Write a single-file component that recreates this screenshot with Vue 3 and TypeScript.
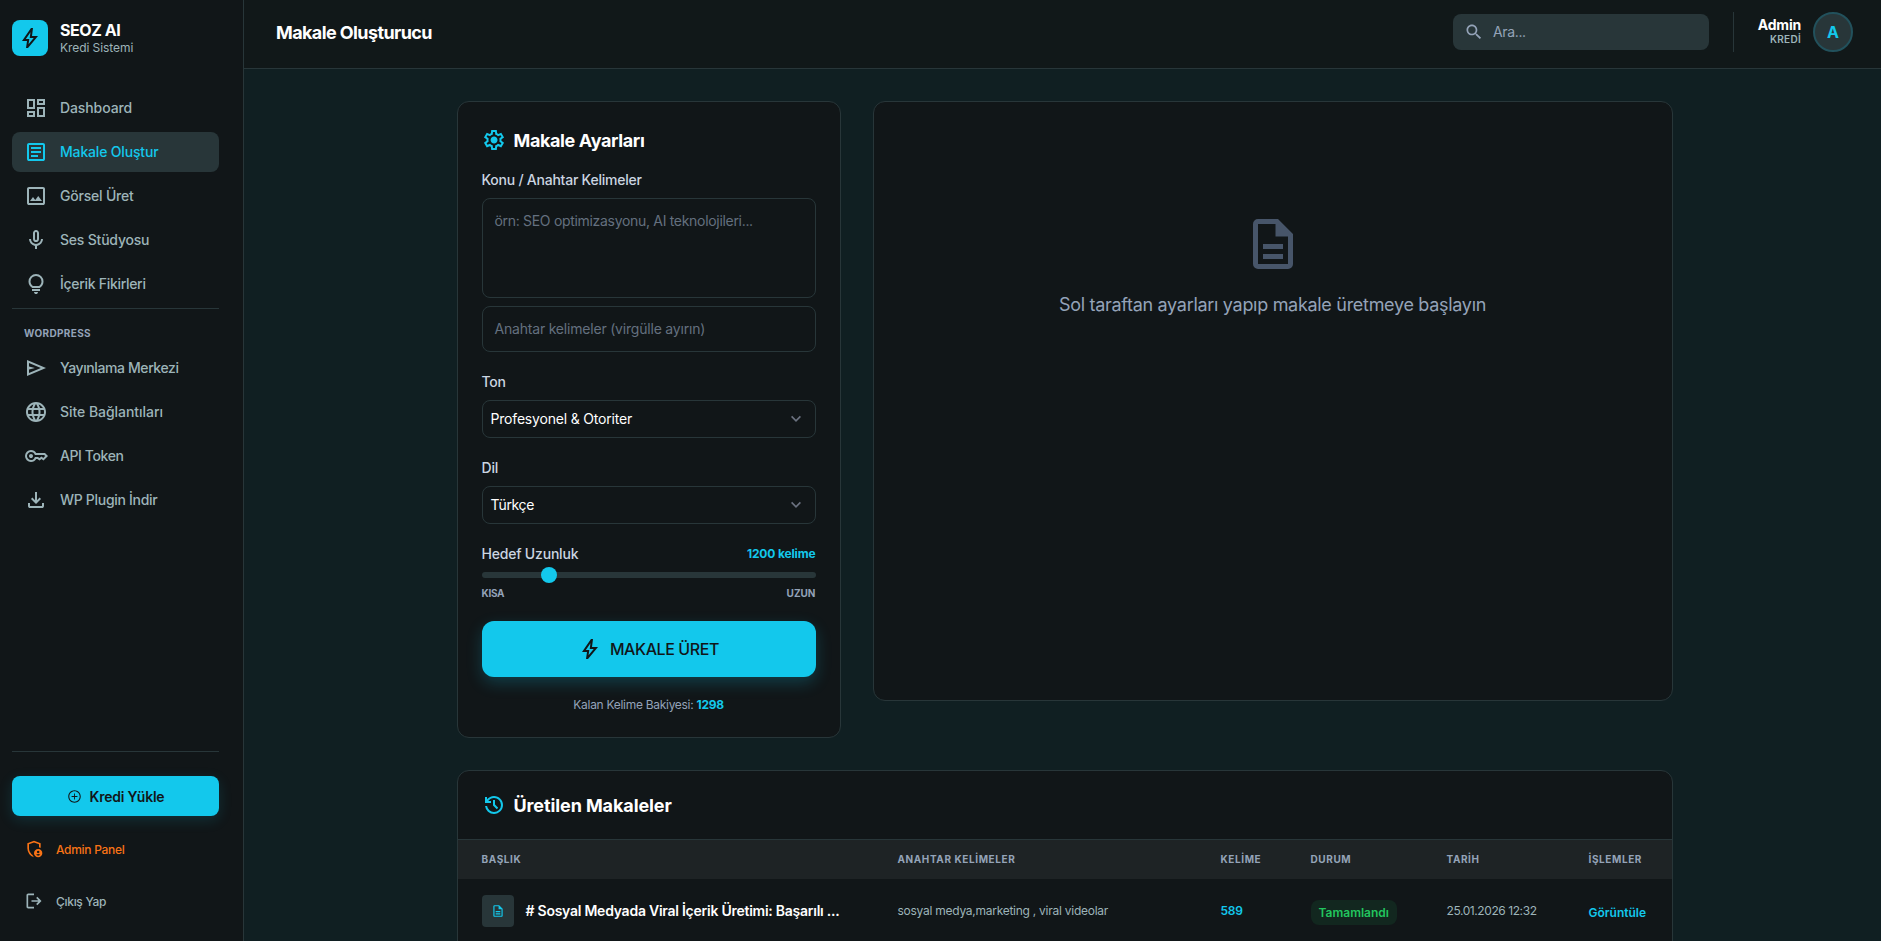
<script setup lang="ts">
import { computed, h, ref, type FunctionalComponent } from 'vue'

const icons: Record<string, string> = {
  bolt: 'm422-232 207-248H469l29-227-185 267h139l-30 208ZM320-80l40-280H160l360-520h80l-40 320h240L400-80h-80Z',
  dashboard: 'M520-600v-240h320v240H520ZM120-440v-400h320v400H120Zm400 320v-400h320v400H520Zm-400 0v-240h320v240H120Zm80-400h160v-240H200v240Zm400 320h160v-240H600v240Zm0-480h160v-80H600v80ZM200-200h160v-80H200v80Z',
  article: 'M280-280h280v-80H280v80Zm0-160h400v-80H280v80Zm0-160h400v-80H280v80Zm-80 480q-33 0-56.5-23.5T120-200v-560q0-33 23.5-56.5T200-840h560q33 0 56.5 23.5T840-760v560q0 33-23.5 56.5T760-120H200Zm0-80h560v-560H200v560Z',
  image: 'M200-120q-33 0-56.5-23.5T120-200v-560q0-33 23.5-56.5T200-840h560q33 0 56.5 23.5T840-760v560q0 33-23.5 56.5T760-120H200Zm0-80h560v-560H200v560Zm40-80h480L570-480 450-320l-90-120-120 160Z',
  mic: 'M480-400q-50 0-85-35t-35-85v-240q0-50 35-85t85-35q50 0 85 35t35 85v240q0 50-35 85t-85 35Zm-40 280v-123q-104-14-172-93t-68-184h80q0 83 58.5 141.5T480-320q83 0 141.5-58.5T680-520h80q0 105-68 184t-172 93v123h-80Zm40-360q17 0 28.5-11.5T520-520v-240q0-17-11.5-28.5T480-800q-17 0-28.5 11.5T440-760v240q0 17 11.5 28.5T480-480Z',
  bulb: 'M480-80q-33 0-56.5-23.5T400-160h160q0 33-23.5 56.5T480-80ZM320-200v-80h320v80H320Zm10-120q-69-41-109.5-110T180-580q0-125 87.5-212.5T480-880q125 0 212.5 87.5T780-580q0 81-40.5 150T630-320H330Zm24-80h252q45-32 69.5-79T700-580q0-92-64-156t-156-64q-92 0-156 64t-64 156q0 54 24.5 101t69.5 79Z',
  send: 'M120-160v-640l760 320-760 320Zm80-120 474-200-474-200v140l240 60-240 60v140Z',
  globe: 'M11.99 2C6.47 2 2 6.48 2 12s4.47 10 9.99 10C17.52 22 22 17.52 22 12S17.52 2 11.99 2zm6.93 6h-2.95c-.32-1.25-.78-2.45-1.38-3.56 1.84.63 3.37 1.91 4.33 3.56zM12 4.04c.83 1.2 1.48 2.53 1.91 3.96h-3.82c.43-1.43 1.08-2.76 1.91-3.96zM4.26 14C4.1 13.36 4 12.69 4 12s.1-1.36.26-2h3.38c-.08.66-.14 1.32-.14 2 0 .68.06 1.34.14 2H4.26zm.82 2h2.95c.32 1.25.78 2.45 1.38 3.56-1.84-.63-3.37-1.9-4.33-3.56zm2.95-8H5.08c.96-1.66 2.49-2.93 4.33-3.56C8.81 5.55 8.35 6.75 8.03 8zM12 19.96c-.83-1.2-1.48-2.53-1.91-3.96h3.82c-.43 1.43-1.08 2.76-1.91 3.96zM14.34 14H9.66c-.09-.66-.16-1.32-.16-2 0-.68.07-1.35.16-2h4.68c.09.65.16 1.32.16 2 0 .68-.07 1.34-.16 2zm.25 5.56c.6-1.11 1.06-2.31 1.38-3.56h2.95c-.96 1.65-2.49 2.93-4.33 3.56zM16.36 14c.08-.66.14-1.32.14-2 0-.68-.06-1.34-.14-2h3.38c.16.64.26 1.31.26 2s-.1 1.36-.26 2h-3.38z',
  key: 'M280-400q-33 0-56.5-23.5T200-480q0-33 23.5-56.5T280-560q33 0 56.5 23.5T360-480q0 33-23.5 56.5T280-400Zm0 160q-100 0-170-70T40-480q0-100 70-170t170-70q67 0 121.5 33t86.5 87h352l120 120-180 180-80-60-80 60-85-60h-47q-32 54-86.5 87T280-240Zm0-80q56 0 98.5-34t56.5-86h125l58 41 82-61 71 55 75-75-40-40H435q-14-52-56.5-86T280-640q-66 0-113 47t-47 113q0 66 47 113t113 47Z',
  download: 'M480-320 280-520l56-58 104 104v-326h80v326l104-104 56 58-200 200ZM240-160q-33 0-56.5-23.5T160-240v-120h80v120h480v-120h80v120q0 33-23.5 56.5T720-160H240Z',
  search: 'M15.5 14h-.79l-.28-.27C15.41 12.59 16 11.11 16 9.5 16 5.91 13.09 3 9.5 3S3 5.91 3 9.5 5.91 16 9.5 16c1.61 0 3.09-.59 4.23-1.57l.27.28v.79l5 4.99L20.49 19l-4.99-5zm-6 0C7.01 14 5 11.99 5 9.5S7.01 5 9.5 5 14 7.01 14 9.5 11.99 14 9.5 14z',
  settings: 'm370-80-16-128q-13-5-24.5-12T307-235l-119 50L78-375l103-78q-1-7-1-13.5v-27q0-6.5 1-13.5L78-585l110-190 119 50q11-8 23-15t24-12l16-128h220l16 128q13 5 24.5 12t22.5 15l119-50 110 190-103 78q1 7 1 13.5v27q0 6.5-2 13.5l103 78-110 190-118-50q-11 8-23 15t-24 12L590-80H370Zm70-80h79l14-106q31-8 57.5-23.5T639-327l99 41 39-68-86-65q5-14 7-29.5t2-31.5q0-16-2-31.5t-7-29.5l86-65-39-68-99 42q-22-23-48.5-38.5T533-694l-13-106h-79l-14 106q-31 8-57.5 23.5T321-633l-99-41-39 68 86 64q-5 15-7 30t-2 32q0 16 2 31t7 30l-86 65 39 68 99-42q22 23 48.5 38.5T427-266l13 106Zm42-180q58 0 99-41t41-99q0-58-41-99t-99-41q-59 0-99.5 41T342-480q0 58 40.5 99t99.5 41Z',
  history: 'M480-120q-138 0-240.5-91.5T122-440h82q14 104 92.5 172T480-200q117 0 198.5-81.5T760-480q0-117-81.5-198.5T480-760q-69 0-129 32t-101 88h110v80H120v-240h80v94q51-64 124.5-99T480-840q75 0 140.5 28.5t114 77q48.5 48.5 77 114T840-480q0 75-28.5 140.5t-77 114q-48.5 48.5-114 77T480-120Zm112-192L440-464v-216h80v184l128 128-56 56Z',
  description: 'M320-240h320v-80H320v80Zm0-160h320v-80H320v80ZM240-80q-33 0-56.5-23.5T160-160v-640q0-33 23.5-56.5T240-880h320l240 240v480q0 33-23.5 56.5T720-80H240Zm280-520v-200H240v640h480v-440H520Z',
  add: 'M12.7 7.3h-1.4v4H7.3v1.4h4v4h1.4v-4h4v-1.4h-4v-4zM12 2C6.48 2 2 6.48 2 12s4.48 10 10 10 10-4.48 10-10S17.52 2 12 2zm0 18.3c-4.58 0-8.3-3.72-8.3-8.3s3.72-8.3 8.3-8.3 8.3 3.72 8.3 8.3-3.72 8.3-8.3 8.3z',
  admin: 'M680-280q25 0 42.5-17.5T740-340q0-25-17.5-42.5T680-400q-25 0-42.5 17.5T620-340q0 25 17.5 42.5T680-280Zm0 120q31 0 57-14.5t42-38.5q-22-13-47-20t-52-7q-27 0-52 7t-47 20q16 24 42 38.5t57 14.5ZM480-80q-139-35-229.5-159.5T160-516v-244l320-120 320 120v227q-19-8-39-14.5t-41-9.5v-147l-240-90-240 90v188q0 47 12.5 94t35 89.5Q310-290 342-254t71 60q11 32 29 61t41 52q-1 0-1.5.5t-1.5.5Zm200 0q-83 0-141.5-58.5T480-280q0-83 58.5-141.5T680-480q83 0 141.5 58.5T880-280q0 83-58.5 141.5T680-80Z',
  logout: 'M200-120q-33 0-56.5-23.5T120-200v-560q0-33 23.5-56.5T200-840h280v80H200v560h280v80H200Zm440-160-55-58 102-102H360v-80h327L585-622l55-58 200 200-200 200Z',
}
const smallGrid = ['globe', 'search', 'add']

const Icon: FunctionalComponent<{ name: string; size?: number }> = (props) =>
  h(
    'svg',
    {
      width: props.size ?? 24,
      height: props.size ?? 24,
      viewBox: smallGrid.includes(props.name) ? '0 0 24 24' : '0 -960 960 960',
      fill: 'currentColor',
      'aria-hidden': 'true',
    },
    [h('path', { d: icons[props.name] })],
  )
Icon.props = ['name', 'size']

interface NavItem { id: string; label: string; icon: string }
const mainNav: NavItem[] = [
  { id: 'dashboard', label: 'Dashboard', icon: 'dashboard' },
  { id: 'article', label: 'Makale Oluştur', icon: 'article' },
  { id: 'image', label: 'Görsel Üret', icon: 'image' },
  { id: 'voice', label: 'Ses Stüdyosu', icon: 'mic' },
  { id: 'ideas', label: 'İçerik Fikirleri', icon: 'bulb' },
]
const wpNav: NavItem[] = [
  { id: 'publish', label: 'Yayınlama Merkezi', icon: 'send' },
  { id: 'sites', label: 'Site Bağlantıları', icon: 'globe' },
  { id: 'token', label: 'API Token', icon: 'key' },
  { id: 'plugin', label: 'WP Plugin İndir', icon: 'download' },
]
const active = ref('article')

const words = ref(1200)
const minWords = 300
const maxWords = 5000
const thumbLeft = computed(() => `${((words.value - minWords) / (maxWords - minWords)) * 318 - 1}px`)

const columns = ['BAŞLIK', 'ANAHTAR KELİMELER', 'KELİME', 'DURUM', 'TARİH', 'İŞLEMLER']
const articles = [
  {
    title: '# Sosyal Medyada Viral İçerik Üretimi: Başarılı ...',
    keywords: 'sosyal medya,marketing , viral videolar',
    words: 589,
    status: 'Tamamlandı',
    date: '25.01.2026 12:32',
  },
]
</script>

<template>
  <div class="app">
    <aside class="sidebar">
      <div class="brand">
        <div class="logo"><Icon name="bolt" /></div>
        <div class="brand-text">
          <strong>SEOZ AI</strong>
          <span>Kredi Sistemi</span>
        </div>
      </div>
      <nav class="nav">
        <a v-for="n in mainNav" :key="n.id" class="nav-item" :class="[n.id, { active: active === n.id }]" @click="active = n.id">
          <Icon :name="n.icon" /><span>{{ n.label }}</span>
        </a>
      </nav>
      <div class="group-title">WORDPRESS</div>
      <nav class="nav">
        <a v-for="n in wpNav" :key="n.id" class="nav-item" :class="[n.id, { active: active === n.id }]" @click="active = n.id">
          <Icon :name="n.icon" /><span>{{ n.label }}</span>
        </a>
      </nav>
      <div class="side-bottom">
        <button class="topup"><Icon name="add" :size="15" /><span>Kredi Yükle</span></button>
        <a class="foot-link admin"><Icon name="admin" :size="20" /><span>Admin Panel</span></a>
        <a class="foot-link logout"><Icon name="logout" :size="20" /><span>Çıkış Yap</span></a>
      </div>
    </aside>

    <div class="main">
      <header class="topbar">
        <h1>Makale Oluşturucu</h1>
        <div class="search"><Icon name="search" :size="20" /><span>Ara...</span></div>
        <div class="user">
          <div class="user-text"><strong>Admin</strong><span>KREDİ</span></div>
          <div class="avatar">A</div>
        </div>
      </header>

      <div class="content">
        <div class="row">
          <section class="card settings">
            <h2><Icon name="settings" /><span>Makale Ayarları</span></h2>
            <label class="label topic">Konu / Anahtar Kelimeler</label>
            <div class="field area">örn: SEO optimizasyonu, AI teknolojileri...</div>
            <div class="field line">Anahtar kelimeler (virgülle ayırın)</div>
            <label class="label">Ton</label>
            <div class="field select">
              <span class="tone">Profesyonel &amp; Otoriter</span>
              <svg width="12" height="8" viewBox="0 0 12 8"><path d="M1.6 1.4 6 5.8l4.4-4.4" /></svg>
            </div>
            <label class="label">Dil</label>
            <div class="field select">
              <span class="lang">Türkçe</span>
              <svg width="12" height="8" viewBox="0 0 12 8"><path d="M1.6 1.4 6 5.8l4.4-4.4" /></svg>
            </div>
            <div class="length">
              <label class="label">Hedef Uzunluk</label>
              <b>{{ words }} kelime</b>
            </div>
            <div class="track"><div class="thumb" :style="{ marginLeft: thumbLeft }"></div></div>
            <div class="scale"><span class="short">KISA</span><span>UZUN</span></div>
            <button class="generate"><Icon name="bolt" /><span>MAKALE ÜRET</span></button>
            <p class="balance">Kalan Kelime Bakiyesi: <b>1298</b></p>
          </section>

          <section class="card preview">
            <Icon name="description" :size="60" />
            <p>Sol taraftan ayarları yapıp makale üretmeye başlayın</p>
          </section>
        </div>

        <section class="card history">
          <h2><Icon name="history" /><span>Üretilen Makaleler</span></h2>
          <div class="grid head">
            <span v-for="c in columns" :key="c">{{ c }}</span>
          </div>
          <div v-for="a in articles" :key="a.title" class="grid body">
            <div class="title-cell">
              <div class="doc"><Icon name="description" :size="14" /></div>
              <strong>{{ a.title }}</strong>
            </div>
            <span class="kw">{{ a.keywords }}</span>
            <span class="count">{{ a.words }}</span>
            <span class="badge">{{ a.status }}</span>
            <span class="date">{{ a.date }}</span>
            <a class="view">Görüntüle</a>
          </div>
        </section>
      </div>
    </div>
  </div>
</template>

<style>
body {
  margin: 0;
  background: #101f22;
  overflow: hidden;
}
</style>

<style scoped>
* {
  box-sizing: border-box;
}
.app {
  display: flex;
  width: 1881px;
  height: 941px;
  overflow: hidden;
  background: #101f22;
  color: #fff;
  font-family: Inter, "Noto Sans", sans-serif;
  font-size: 14px;
  line-height: 20px;
}
svg {
  display: block;
  flex: none;
}
span, strong, b, p, h1, h2 {
  white-space: nowrap;
}
button {
  border: 0;
  padding: 0;
  font-family: inherit;
}

/* Sidebar */
.sidebar {
  flex: none;
  display: flex;
  flex-direction: column;
  width: 244px;
  padding: 20px 24px 0 12px;
  border-right: 1px solid #283639;
  background: #111618;
}
.brand {
  display: flex;
  gap: 12px;
  height: 68px;
}
.logo {
  display: grid;
  place-items: center;
  width: 36px;
  height: 36px;
  border-radius: 8px;
  background: #13c8ec;
  color: #111618;
}
.brand-text {
  display: flex;
  flex-direction: column;
}
.brand-text strong {
  font-size: 16px;
  font-weight: 700;
  line-height: 20px;
  letter-spacing: -0.45px;
}
.brand-text span {
  font-size: 12px;
  line-height: 15px;
  letter-spacing: -0.07px;
  color: #9db4b9;
}
.nav {
  display: flex;
  flex-direction: column;
  gap: 4px;
}
.nav-item {
  display: flex;
  align-items: center;
  gap: 12px;
  height: 40px;
  padding-left: 12px;
  border-radius: 8px;
  color: #9db4b9;
  font-weight: 500;
  letter-spacing: -0.3px;
}
.nav-item.dashboard {
  letter-spacing: -0.1px;
}
.nav-item.article {
  letter-spacing: -0.17px;
}
.nav-item.image,
.nav-item.voice {
  letter-spacing: -0.2px;
}
.nav-item.publish,
.nav-item.token {
  letter-spacing: -0.4px;
}
.nav-item.sites {
  letter-spacing: -0.05px;
}
.nav-item.active {
  background: #283639;
  color: #13c8ec;
}
.group-title {
  height: 40px;
  margin-top: 4px;
  padding: 16px 12px 0;
  border-top: 1px solid #283639;
  color: #94a3b8;
  font-size: 10px;
  font-weight: 700;
  line-height: 16px;
  letter-spacing: 0.35px;
}
.side-bottom {
  margin-top: auto;
  height: 190px;
  padding-top: 24px;
  border-top: 1px solid #283639;
}
.topup {
  display: flex;
  align-items: center;
  justify-content: center;
  gap: 8px;
  width: 207px;
  height: 40px;
  border-radius: 8px;
  background: #13c8ec;
  box-shadow: 0 4px 14px rgba(19, 200, 236, 0.15);
  color: #111618;
  font-size: 14px;
  font-weight: 600;
  letter-spacing: -0.22px;
}
.foot-link {
  display: flex;
  align-items: center;
  gap: 12px;
  height: 40px;
  margin-top: 13px;
  padding-left: 12px;
  color: #9db4b9;
  font-size: 12px;
  font-weight: 500;
  letter-spacing: -0.3px;
}
.foot-link span {
  padding-top: 1px;
}
.foot-link.admin {
  color: #f97316;
}
.foot-link.logout {
  margin-top: 12px;
}

/* Top bar */
.main {
  flex: 1;
  min-width: 0;
}
.topbar {
  display: flex;
  align-items: flex-start;
  height: 69px;
  padding: 12px 28px 0 32px;
  border-bottom: 1px solid #283639;
  background: #111819;
}
h1 {
  margin: 7px auto 0 0;
  font-size: 18px;
  font-weight: 700;
  line-height: 28px;
  letter-spacing: -0.6px;
}
.search {
  display: flex;
  align-items: center;
  gap: 9px;
  width: 256px;
  height: 36px;
  margin-top: 2px;
  padding-left: 11px;
  border-radius: 8px;
  background: #283639;
  color: #94a3b8;
  letter-spacing: -0.35px;
}
.user {
  display: flex;
  gap: 12px;
  height: 40px;
  margin-left: 24px;
  padding-left: 23px;
  border-left: 1px solid #283639;
}
.user-text {
  display: flex;
  flex-direction: column;
  align-items: flex-end;
  width: 44px;
  padding-top: 5px;
}
.user-text strong {
  font-size: 14px;
  font-weight: 700;
  line-height: 16px;
  letter-spacing: -0.2px;
}
.user-text span {
  color: #9db4b9;
  font-size: 10px;
  font-weight: 600;
  line-height: 12px;
  letter-spacing: 0.3px;
}
.avatar {
  display: grid;
  place-items: center;
  width: 40px;
  height: 40px;
  border: 2px solid #22515c;
  border-radius: 50%;
  background: #283639;
  color: #13c8ec;
  font-size: 16px;
  font-weight: 700;
}

/* Content */
.content {
  width: 1216px;
  margin: 32px 0 0 212.5px;
}
.row {
  display: flex;
  align-items: flex-start;
  gap: 32px;
}
.card {
  border: 1px solid #283639;
  border-radius: 12px;
  background: #111618;
}
h2 {
  display: flex;
  align-items: center;
  gap: 8px;
  margin: 0;
  font-size: 18px;
  font-weight: 700;
  line-height: 28px;
}
h2 svg {
  color: #13c8ec;
}
h2 span {
  padding-top: 1px;
}
.settings {
  width: 384px;
  height: 637px;
  padding: 24px;
}
.settings h2 {
  height: 28px;
  margin-bottom: 16px;
  letter-spacing: -0.38px;
}
.label {
  display: block;
  color: #cbd5e1;
  font-weight: 500;
  letter-spacing: -0.2px;
}
.topic {
  margin: 0 0 8px;
  letter-spacing: -0.24px;
}
.field {
  border: 1px solid #283639;
  border-radius: 8px;
  color: #64707f;
}
.area {
  height: 100px;
  padding: 12px;
  letter-spacing: -0.31px;
}
.line {
  height: 46px;
  margin: 8px 0 20px;
  padding: 12px;
  letter-spacing: -0.2px;
}
.select {
  display: flex;
  align-items: center;
  justify-content: space-between;
  height: 38px;
  margin: 8px 0 20px;
  padding: 0 13px 0 8px;
  color: #fff;
}
.tone {
  letter-spacing: -0.19px;
}
.lang {
  letter-spacing: -0.35px;
}
.select svg {
  fill: none;
  stroke: #6b7280;
  stroke-width: 1.6;
}
.length {
  display: flex;
  justify-content: space-between;
}
.length b {
  color: #13c8ec;
  font-size: 12px;
  letter-spacing: -0.15px;
}
.track {
  display: flex;
  align-items: center;
  height: 6px;
  margin: 8px 0;
  border-radius: 3px;
  background: #283639;
}
.thumb {
  width: 16px;
  height: 16px;
  border-radius: 50%;
  background: #13c8ec;
}
.scale {
  display: flex;
  justify-content: space-between;
  color: #94a3b8;
  font-size: 10px;
  font-weight: 700;
  line-height: 15px;
}
.short {
  letter-spacing: -0.3px;
}
.generate {
  display: flex;
  align-items: center;
  justify-content: center;
  gap: 8px;
  width: 334px;
  height: 56px;
  margin-top: 20px;
  border-radius: 12px;
  background: #13c8ec;
  box-shadow: 0 6px 16px rgba(19, 200, 236, 0.22);
  color: #111618;
  font-size: 16px;
  font-weight: 500;
  letter-spacing: -0.4px;
}
.balance {
  margin: 20px 0 0;
  text-align: center;
  color: #94a3b8;
  font-size: 12px;
  line-height: 16px;
  letter-spacing: -0.29px;
}
.balance b {
  color: #13c8ec;
}
.preview {
  display: flex;
  flex-direction: column;
  align-items: center;
  width: 800px;
  height: 600px;
  padding-top: 112px;
  color: #475569;
}
.preview p {
  margin: 17px 0 0;
  color: #94a3b8;
  font-size: 18px;
  line-height: 28px;
  letter-spacing: -0.3px;
}

/* History table */
.history {
  height: 300px;
  margin-top: 32px;
  overflow: hidden;
}
.history h2 {
  height: 68px;
  padding-left: 24px;
  letter-spacing: -0.1px;
}
.grid {
  display: grid;
  grid-template-columns: 416px 323px 90px 136px 142px 1fr;
  align-items: center;
  justify-items: start;
  padding-left: 24px;
}
.head {
  height: 40px;
  padding-bottom: 1px;
  border-top: 1px solid #283639;
  background: #1e2325;
  color: #94a3b8;
  font-size: 10px;
  font-weight: 700;
  letter-spacing: 0.6px;
}
.body {
  height: 64px;
  font-size: 12px;
}
.title-cell {
  display: flex;
  align-items: center;
  gap: 12px;
}
.title-cell strong {
  font-size: 14px;
  font-weight: 600;
  letter-spacing: -0.25px;
}
.doc {
  display: grid;
  place-items: center;
  width: 32px;
  height: 32px;
  border-radius: 4px;
  background: #283639;
  color: #13c8ec;
}
.kw, .date {
  color: #9db4b9;
}
.kw {
  letter-spacing: -0.26px;
}
.date {
  letter-spacing: -0.42px;
}
.count, .view {
  color: #13c8ec;
  font-weight: 600;
}
.count {
  letter-spacing: -0.3px;
}
.badge {
  margin-top: 3px;
  padding: 3px 8px 2px;
  border-radius: 8px;
  background: #12271f;
  color: #22c55e;
  font-weight: 600;
}
.view {
  margin-top: 4px;
}
</style>
